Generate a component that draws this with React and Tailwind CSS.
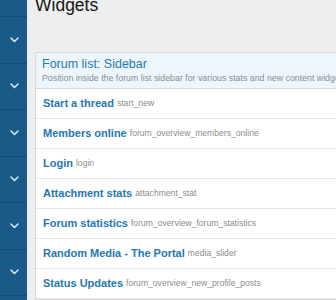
const widgets = [
  { title: "Start a thread", id: "start_new" },
  { title: "Members online", id: "forum_overview_members_online" },
  { title: "Login", id: "login" },
  { title: "Attachment stats", id: "attachment_stat" },
  { title: "Forum statistics", id: "forum_overview_forum_statistics" },
  { title: "Random Media - The Portal", id: "media_slider" },
  { title: "Status Updates", id: "forum_overview_new_profile_posts" },
];

function Chevron() {
  return (
    <svg width="9" height="6" viewBox="0 0 9 6" fill="none">
      <polyline points="1,1 4.5,4.5 8,1" stroke="#d2e5f4" strokeWidth="1.6" strokeLinecap="round" strokeLinejoin="round" />
    </svg>
  );
}

export default function App() {
  return (
    <div className="flex h-[300px] w-[336px] overflow-hidden bg-[#eeeeee] font-['Liberation_Sans',Arial,sans-serif]">
      <aside className="flex w-[27px] shrink-0 flex-col bg-[#195a89]">
        <div className="h-[17px] shrink-0 border-b border-[#134a72]" />
        {[0, 1, 2, 3, 4, 5].map((i) => (
          <div key={i} className="flex h-[46.5px] shrink-0 items-center justify-center border-b border-[#134a72] pl-[1px]">
            <Chevron />
          </div>
        ))}
      </aside>

      <main className="min-w-0 flex-1 pl-[8px]">
        <h1 className="-mt-[5px] text-[17.5px] leading-[20px] text-[#141414]">Widgets</h1>

        <section className="mt-[37px] w-[400px] border border-[#d9d9d9] bg-white">
          <div className="border-b border-[#d9d9d9] bg-[#edf6fd] px-[6px] pb-[4px] pt-[3.5px]">
            <h2 className="whitespace-nowrap text-[12.5px] leading-[14px] text-[#2577b2]">Forum list: Sidebar</h2>
            <p className="mt-[1.5px] whitespace-nowrap text-[8.8px] leading-[12px] text-[#8c8c8c]">
              Position inside the forum list sidebar for various stats and new content widgets.
            </p>
          </div>
          {widgets.map((w) => (
            <div key={w.id} className="flex h-[30px] items-center gap-[3px] whitespace-nowrap border-b border-[#e6e6e6] px-[7px]">
              <span className="text-[11px] font-bold text-[#2577b2]">{w.title}</span>
              <span className="text-[8.6px] text-[#8c8c8c]">{w.id}</span>
            </div>
          ))}
        </section>
      </main>
    </div>
  );
}
